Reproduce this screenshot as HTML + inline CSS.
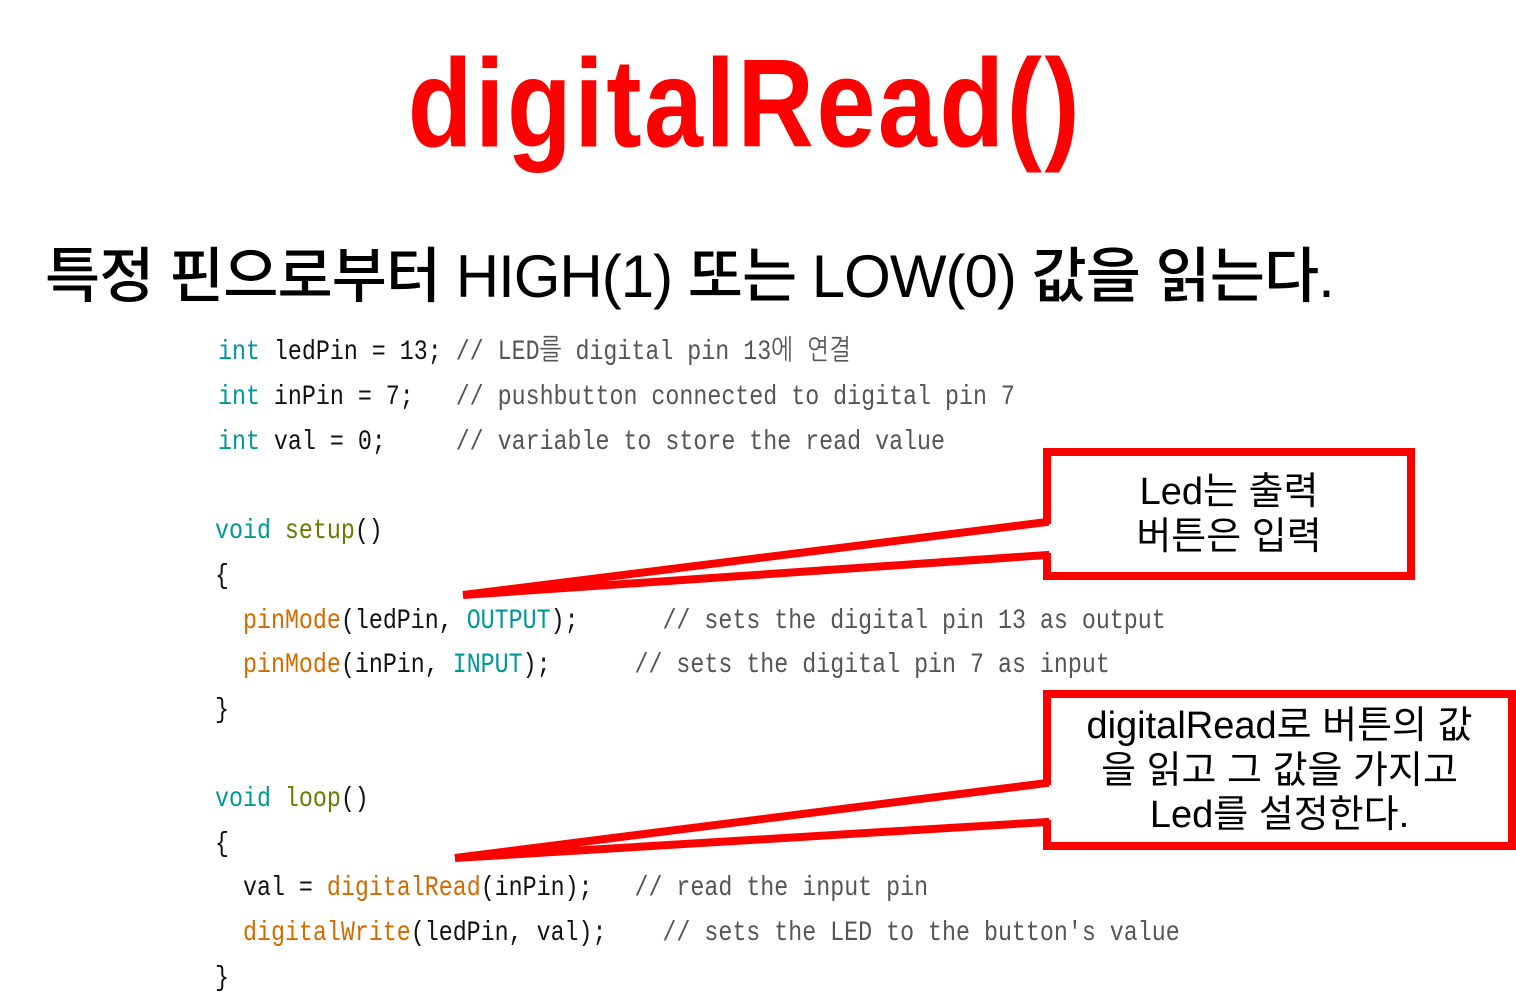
<!DOCTYPE html>
<html><head><meta charset="utf-8"><style>
html,body{margin:0;padding:0;background:#fff;width:1516px;height:1005px;overflow:hidden;position:relative}
.t{position:absolute;left:0;width:1490px;text-align:center;top:44px;font:bold 106px "Liberation Sans",sans-serif;color:#f00;letter-spacing:2.5px;transform:scaleY(1.18)}
.s{position:absolute;left:45px;top:228px;font:500 60px "Liberation Sans","Noto Sans CJK KR",sans-serif;color:#000;white-space:nowrap;letter-spacing:-1px}
.c{position:absolute;font:23.3px "Liberation Mono","NanumGothic",monospace;white-space:pre;color:#111;transform:scaleY(1.2);transform-origin:left center;line-height:30px}
.k{color:#00979c}.f{color:#6b7a00}.o{color:#d36a00}.m{color:#555}
.b{position:absolute;text-align:center;font:38px "Liberation Sans","Noto Sans CJK KR",sans-serif;color:#000;line-height:44.5px;white-space:nowrap}
</style></head><body>
<div class="t">digitalRead()</div>
<div class="s">특정 핀으로부터 HIGH(1) 또는 LOW(0) 값을 읽는다.</div>

<div class="c" style="left:218px;top:337px"><span class="k">int</span> ledPin = 13; <span class="m">// LED를 digital pin 13에 연결</span></div>
<div class="c" style="left:218px;top:382px"><span class="k">int</span> inPin = 7;   <span class="m">// pushbutton connected to digital pin 7</span></div>
<div class="c" style="left:218px;top:427px"><span class="k">int</span> val = 0;     <span class="m">// variable to store the read value</span></div>
<div class="c" style="left:215px;top:516px"><span class="k">void</span> <span class="f">setup</span>()</div>
<div class="c" style="left:215px;top:561px">{</div>
<div class="c" style="left:243px;top:606px"><span class="o">pinMode</span>(ledPin, <span class="k">OUTPUT</span>);      <span class="m">// sets the digital pin 13 as output</span></div>
<div class="c" style="left:243px;top:650px"><span class="o">pinMode</span>(inPin, <span class="k">INPUT</span>);      <span class="m">// sets the digital pin 7 as input</span></div>
<div class="c" style="left:215px;top:695px">}</div>
<div class="c" style="left:215px;top:784px"><span class="k">void</span> <span class="f">loop</span>()</div>
<div class="c" style="left:215px;top:829px">{</div>
<div class="c" style="left:243px;top:873px">val = <span class="o">digitalRead</span>(inPin);   <span class="m">// read the input pin</span></div>
<div class="c" style="left:243px;top:918px"><span class="o">digitalWrite</span>(ledPin, val);    <span class="m">// sets the LED to the button's value</span></div>
<div class="c" style="left:215px;top:963px">}</div>

<svg style="position:absolute;left:0;top:0" width="1516" height="1005">
<g fill="#fff" stroke="#f00" stroke-width="8">
<polygon points="1047,452 1411,452 1411,576 1047,576 1047,555 463,595 1047,522"/>
<polygon points="1047,694 1512,694 1512,846 1047,846 1047,822 455,858 1047,783"/>
</g>
<rect x="1049" y="524" width="6" height="29" fill="#fff"/>
<rect x="1049" y="785" width="6" height="35" fill="#fff"/>
</svg>
<div class="b" style="left:1051px;width:356px;top:470px">Led는 출력<br>버튼은 입력</div>
<div class="b" style="left:1051px;width:457px;top:704px">digitalRead로 버튼의 값<br>을 읽고 그 값을 가지고<br>Led를 설정한다.</div>
</body></html>
